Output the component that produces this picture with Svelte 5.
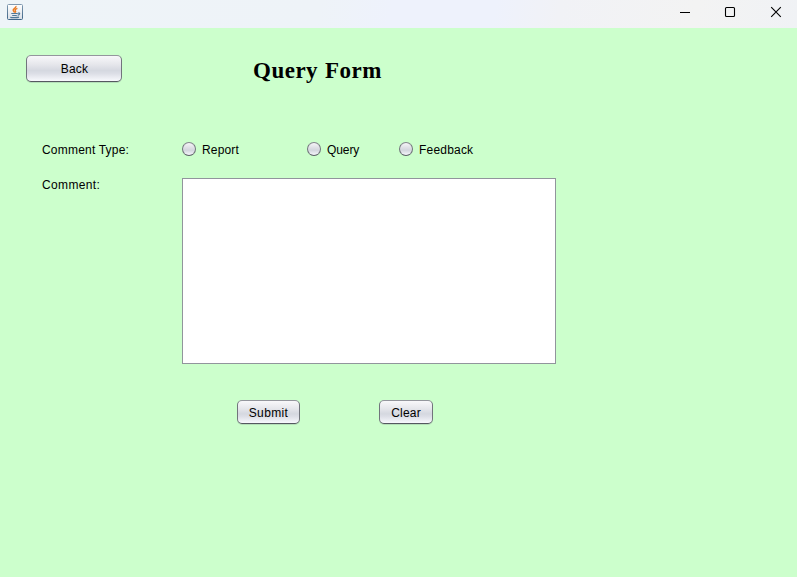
<script>
  const types = [
    { label: 'Report', width: 125, spacing: 0.15 },
    { label: 'Query', width: 92, spacing: -0.1 },
    { label: 'Feedback', width: 80, spacing: 0.2 }
  ];
  let selected = $state('');
  let comment = $state('');

  function clear() {
    selected = '';
    comment = '';
  }
</script>

<div class="window">
  <header class="titlebar">
    <svg class="app-icon" width="16" height="16" viewBox="0 0 16 16">
      <defs>
        <linearGradient id="frame" x1="0" y1="0" x2="0" y2="1">
          <stop offset="0" stop-color="#8099b0" />
          <stop offset="1" stop-color="#3f6688" />
        </linearGradient>
        <linearGradient id="paper" x1="0" y1="0" x2="0" y2="1">
          <stop offset="0" stop-color="#ffffff" />
          <stop offset="1" stop-color="#d9dfe6" />
        </linearGradient>
      </defs>
      <rect x=".5" y=".5" width="15" height="15" rx="1" fill="url(#paper)" stroke="url(#frame)" />
      <path d="M9 2C9.5 4 5.5 4.7 6.2 6.6C6.5 7.4 7.5 7.8 7.6 8.7M10.4 4.3C8.5 5 7.5 5.8 8.4 6.9C8.9 7.6 8.8 8 8.2 8.6" fill="none" stroke="#ea7a20" stroke-width="1.4" />
      <path d="M4.3 9.5H10.8M5.2 11.5H9.8M11 9.2C13.5 8.5 13 10.7 10.7 11.3M3.3 13.3C5 13.8 10 13.8 12 13.1" fill="none" stroke="#4f7898" stroke-width="1.2" />
    </svg>
    <div class="controls">
      <button class="minimize" aria-label="Minimize">
        <svg width="12" height="12" viewBox="0 0 12 12"><path d="M1 6.5H11" stroke="#000" /></svg>
      </button>
      <button aria-label="Maximize">
        <svg width="12" height="12" viewBox="0 0 12 12"><rect x="1.5" y="1.5" width="9" height="9" rx="1" fill="none" stroke="#000" stroke-width="1.1" /></svg>
      </button>
      <button aria-label="Close">
        <svg width="12" height="12" viewBox="0 0 12 12"><path d="M1.2 1.2L10.8 10.8M10.8 1.2L1.2 10.8" stroke="#000" stroke-width="1.1" /></svg>
      </button>
    </div>
  </header>

  <main>
    <div class="heading">
      <button class="push back">Back</button>
      <h1>Query Form</h1>
    </div>

    <div class="row type-row">
      <span class="caption">Comment Type:</span>
      {#each types as type}
        <label style="width: {type.width}px; letter-spacing: {type.spacing}px">
          <input type="radio" name="type" value={type.label} bind:group={selected} />
          {type.label}
        </label>
      {/each}
    </div>

    <div class="row comment-row">
      <label class="caption" for="comment">Comment:</label>
      <textarea id="comment" bind:value={comment}></textarea>
    </div>

    <div class="actions">
      <button class="push submit">Submit</button>
      <button class="push clear" onclick={clear}>Clear</button>
    </div>
  </main>
</div>

<style>
  .window {
    width: 797px;
    height: 577px;
    overflow: hidden;
    display: flex;
    flex-direction: column;
    background: #ccffcc;
    color: #000;
    font: 12px/16px "Liberation Sans", Arial, sans-serif;
  }

  .titlebar {
    flex: none;
    height: 28px;
    box-sizing: border-box;
    display: flex;
    justify-content: space-between;
    align-items: flex-start;
    padding-left: 7px;
    background: linear-gradient(100deg, #eef4f8 0%, #eef3f8 40%, #eef2fc 49%, #eef2fc 62%, #f1f2f6 70%, #f3f3f3 87%, #f0f2f5 100%);
  }

  .app-icon {
    margin-top: 4px;
  }

  .controls {
    display: flex;
    margin-right: -2px;
  }

  .controls button {
    width: 46px;
    height: 24px;
    padding: 0;
    border: 0;
    background: none;
    display: flex;
    align-items: center;
    justify-content: center;
  }

  .controls .minimize {
    width: 44px;
  }

  .controls svg {
    display: block;
  }

  main {
    flex: 1;
    padding-top: 27px;
  }

  .heading {
    display: flex;
    height: 27px;
    padding-left: 26px;
  }

  h1 {
    margin: 2px 0 0 131px;
    font: bold 23px/27px "Liberation Serif", "Times New Roman", serif;
    letter-spacing: 0.5px;
    word-spacing: 0.6px;
    white-space: nowrap;
  }

  .push {
    box-sizing: border-box;
    padding: 0;
    border: 1px solid;
    border-color: #94969d #71747c #555860;
    border-radius: 5px;
    background: linear-gradient(#f8f8fa 0%, #e5e6eb 35%, #d5d8e0 58%, #dcdee6 70%, #f8f9fd 100%);
    color: #000;
    font: inherit;
    letter-spacing: 0.2px;
    box-shadow: 0 1px 0 #b5dfb9;
  }

  .back {
    width: 96px;
    height: 27px;
    padding-left: 1px;
  }

  .row {
    display: flex;
    padding-left: 42px;
  }

  .caption {
    flex: none;
    width: 140px;
    letter-spacing: 0.2px;
  }

  .type-row {
    height: 16px;
    margin-top: 60px;
  }

  .type-row label {
    display: flex;
    align-items: flex-start;
    gap: 6px;
  }

  input {
    appearance: none;
    box-sizing: border-box;
    flex: none;
    width: 14px;
    height: 14px;
    margin: 0;
    border: 1px solid;
    border-color: #85878e #70737a #5a5d65;
    border-radius: 50%;
    background: linear-gradient(#f6f6f8 0%, #dedfe5 40%, #d3d6de 60%, #f5f6fb 100%);
  }

  input:checked {
    background: radial-gradient(circle, #222 0 2.5px, #dedfe5 3px);
  }

  .comment-row {
    margin-top: 20px;
  }

  .comment-row .caption {
    margin-top: -1px;
    letter-spacing: 0.35px;
  }

  textarea {
    box-sizing: border-box;
    display: block;
    width: 374px;
    height: 186px;
    margin: 0;
    padding: 4px;
    border: 1px solid #91959c;
    border-radius: 0;
    background: #fff;
    resize: none;
    outline: 0;
    font: inherit;
  }

  .actions {
    display: flex;
    gap: 79px;
    margin-top: 36px;
    padding-left: 237px;
  }

  .actions .push {
    height: 24px;
    padding-top: 2px;
  }

  .submit {
    width: 63px;
    letter-spacing: 0.35px;
  }

  .clear {
    width: 54px;
  }
</style>
